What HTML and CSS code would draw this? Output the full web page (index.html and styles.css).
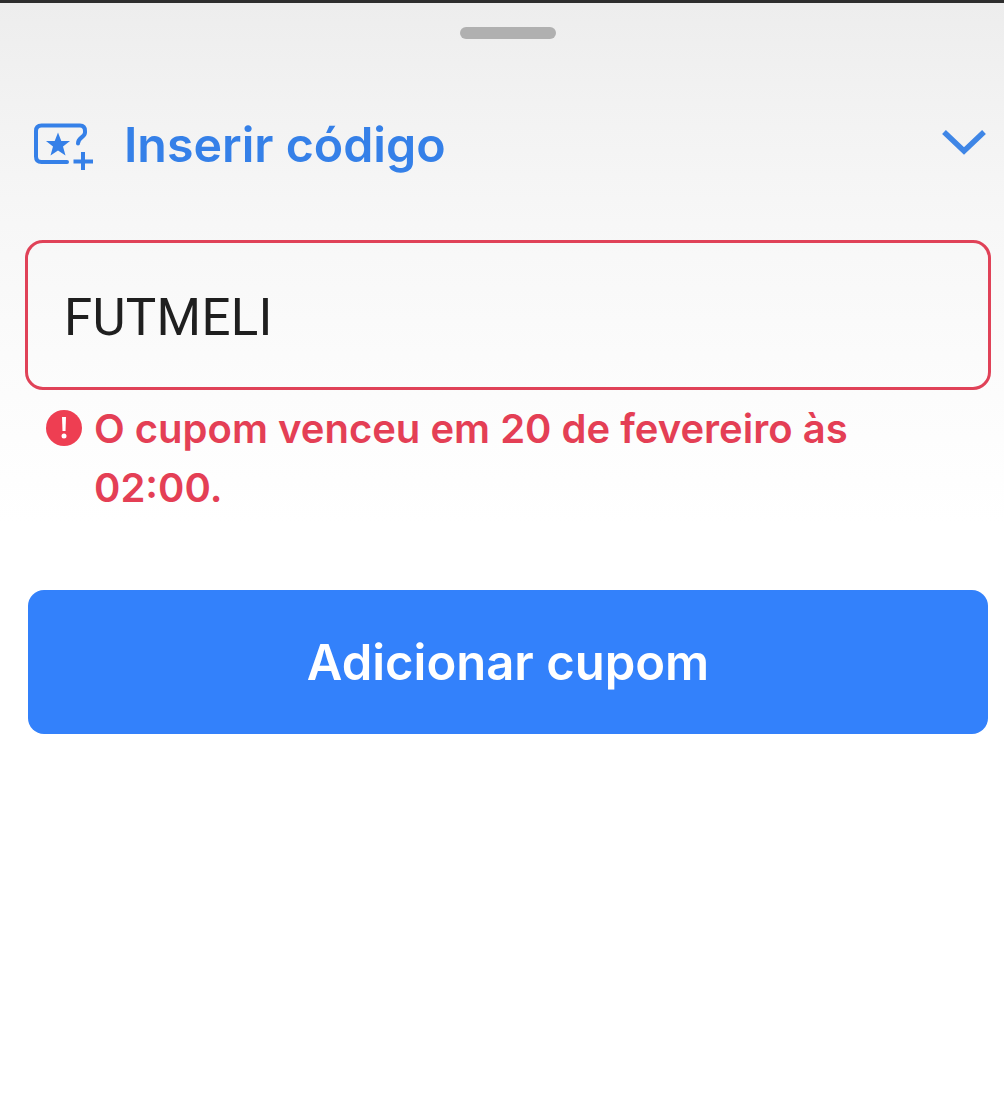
FILE: index.html
```html
<!DOCTYPE html>
<html lang="pt-BR">
<head>
<meta charset="utf-8">
<title>Inserir código</title>
<link rel="stylesheet" href="styles.css">
</head>
<body>
<div class="sheet">
  <div class="handle"></div>
  <div class="header">
    <svg class="coupon-icon" viewBox="0 0 60 48" width="60" height="48" aria-hidden="true">
      <path d="M33 39H7.500Q2 39 2 33.500V8Q2 2.500 7.500 2.500H46Q51 2.500 51 8V9.500Q51 12 47.500 14.500Q44 17 44 20.500" fill="none" stroke="#3580e8" stroke-width="4" stroke-linecap="round"/>
      <path d="M24 9.500L27.300 18H36L29 23.500L31.500 32.500L24 27.500L16.500 32.500L19 23.500L12 18H20.700Z" fill="#3580e8"/>
      <path d="M49 29V47M39.500 38.500H59" fill="none" stroke="#3580e8" stroke-width="4"/>
    </svg>
    <span class="title">Inserir código</span>
    <svg class="chevron" viewBox="0 0 44 26" width="44" height="26" aria-hidden="true">
      <path d="M2 3L22 22L42 3" fill="none" stroke="#3f86e6" stroke-width="5.500"/>
    </svg>
  </div>
  <div class="field">FUTMELI</div>
  <div class="error">
    <svg class="error-icon" viewBox="0 0 36 36" width="36" height="36" aria-hidden="true">
      <circle cx="18" cy="18" r="18" fill="#ee3e52"/>
      <path d="M16 7H20L19.500 21H16.500Z" fill="#fff"/>
      <circle cx="18" cy="26" r="2.500" fill="#fff"/>
    </svg>
    <p class="error-text">O cupom venceu em 20 de fevereiro às 02:00.</p>
  </div>
  <button class="submit">Adicionar cupom</button>
</div>
</body>
</html>
```
FILE: styles.css
```css
html, body {
  margin: 0;
  padding: 0;
  height: 100%;
  background: #fff;
}
.sheet {
  box-sizing: border-box;
  height: 1101px;
  border-top: 3px solid #2e2e2e;
  padding: 24px 16px 0 28px;
  background: linear-gradient(#ededed 0, #f2f2f2 100px, #f7f7f7 220px, #fbfbfb 350px, #fff 520px);
  font-family: "Inter", "Liberation Sans", sans-serif;
  overflow: hidden;
}
.handle {
  width: 96px;
  height: 12px;
  margin: 0 auto;
  border-radius: 6px;
  background: #b0b0b0;
}
.header {
  display: flex;
  align-items: center;
  margin-top: 75px;
  padding-left: 6px;
  height: 60px;
}
.coupon-icon { flex: none; margin-top: 6px; }
.title {
  margin-left: 30px;
  font-size: 48.300px;
  font-weight: 600;
  color: #3580e8;
  flex: 1;
}
.chevron { flex: none; margin: -4px 2px 0 0; }
.field {
  box-sizing: border-box;
  margin: 66px 14px 0 -3px;
  width: 966px;
  height: 150px;
  border: 3px solid #e04258;
  border-radius: 18px;
  padding: 4px 0 0 36px;
  display: flex;
  align-items: center;
  font-family: "Roboto", sans-serif;
  font-size: 51px;
  letter-spacing: 0.300px;
  color: #1f1f1f;
}
.error {
  display: flex;
  align-items: flex-start;
  margin-top: 20px;
  padding-left: 18px;
  gap: 13px;
}
.error-icon { flex: none; }
.error-text {
  margin: -11px 0 0 -1px;
  width: 800px;
  font-size: 40px;
  line-height: 59px;
  font-weight: 600;
  color: #e43f55;
}
.submit {
  display: block;
  width: 960px;
  height: 144px;
  margin-top: 73px;
  border: none;
  border-radius: 16px;
  background: #3381fb;
  color: #fff;
  font-family: inherit;
  font-size: 49px;
  font-weight: 600;
}
```
